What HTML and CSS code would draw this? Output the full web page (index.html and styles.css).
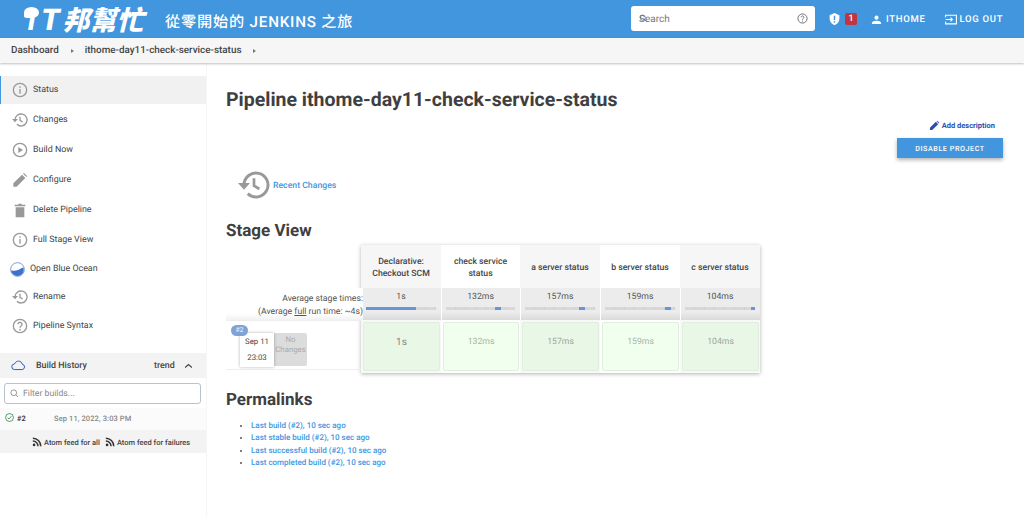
FILE: index.html
```html
<!DOCTYPE html>
<html lang="en">
<head>
<meta charset="utf-8">
<title>Pipeline ithome-day11-check-service-status</title>
<link rel="stylesheet" href="styles.css">
</head>
<body>
<header class="topbar">
  <div class="logo"><span class="logo-i">i</span><span class="logo-t">T</span><span class="logo-cjk">邦幫忙</span></div>
  <div class="site-title">從零開始的 JENKINS 之旅</div>
  <div class="search">
    <svg class="search-icon" viewBox="0 0 12 12"><circle cx="5" cy="5" r="3.4" fill="none" stroke="#666" stroke-width="1"/><path d="M7.5 7.5l3 3" stroke="#666" stroke-width="1"/></svg>
    <span class="search-text">Search</span>
    <svg class="help-icon" viewBox="0 0 24 24"><circle cx="12" cy="12" r="10" fill="none" stroke="#666" stroke-width="2"/><path d="M9 9.5a3 3 0 1 1 4.6 2.5c-1 .7-1.6 1.2-1.6 2.5" fill="none" stroke="#666" stroke-width="2"/><circle cx="12" cy="17.5" r="1.3" fill="#666"/></svg>
  </div>
  <svg class="shield" viewBox="0 0 24 24"><path d="M12 1L3 5v6c0 5.6 3.8 10.7 9 12 5.200-1.300 9-6.400 9-12V5z" fill="#fff"/><rect x="10.700" y="6" width="2.600" height="8" fill="#4296de"/><rect x="10.700" y="16" width="2.600" height="2.600" fill="#4296de"/></svg>
  <span class="badge">1</span>
  <svg class="user-icon" viewBox="0 0 24 24"><circle cx="12" cy="8" r="4.500" fill="#fff"/><path d="M2 22v-2.500c0-3.500 6.500-5 10-5s10 1.500 10 5V22z" fill="#fff"/></svg>
  <span class="top-link user-name">ITHOME</span>
  <svg class="logout-icon" viewBox="0 0 24 24"><path d="M2 8V4h20v16H2v-4M2 12h12M11 8.500l3.500 3.500-3.500 3.500" fill="none" stroke="#fff" stroke-width="2"/></svg>
  <span class="top-link">LOG OUT</span>
</header>

<nav class="crumbs">
  <span class="crumb">Dashboard</span><span class="crumb-arrow"></span>
  <span class="crumb">ithome-day11-check-service-status</span><span class="crumb-arrow"></span>
</nav>

<div class="page">
  <aside class="sidebar">
    <ul class="tasks">
      <li class="task active"><svg class="ti" viewBox="0 0 24 24"><circle cx="12" cy="12" r="10" class="ol"/><path d="M12 10.500v7" class="ol"/><circle cx="12" cy="7.500" r="1.300" class="fi"/></svg>Status</li>
      <li class="task"><svg class="ti" viewBox="0 0 24 24"><path d="M4.500 12a9 9 0 1 1 2.800 6.500" class="ol"/><path d="M0 10.500h9l-4.500 5z" class="fi"/><path d="M12 7v5.500l4 2.500" class="ol"/></svg>Changes</li>
      <li class="task"><svg class="ti" viewBox="0 0 24 24"><circle cx="12" cy="12" r="10" class="ol"/><path d="M9.500 7.500l7 4.500-7 4.500z" class="fi"/></svg>Build Now</li>
      <li class="task"><svg class="ti" viewBox="0 0 24 24"><path d="M2 22v-5L15 4l5 5L7 22zM16.500 2.500l1.500-1 4.500 4.500-1 1.500z" class="fi"/></svg>Configure</li>
      <li class="task"><svg class="ti" viewBox="0 0 24 24"><path d="M4 4h5l1-1.500h4L15 4h5v2.500H4zM5.500 8h13v15h-13z" class="fi"/></svg>Delete Pipeline</li>
      <li class="task"><svg class="ti" viewBox="0 0 24 24"><circle cx="12" cy="12" r="10" class="ol"/><path d="M12 10.500v7" class="ol"/><circle cx="12" cy="7.500" r="1.300" class="fi"/></svg>Full Stage View</li>
      <li class="task ocean"><svg class="oi" viewBox="0 0 24 24"><circle cx="12" cy="12" r="11" fill="#fff" stroke="#6d9be3" stroke-width="1.500"/><path d="M2 13c5 1.500 9 1 13-1 2.500-1.200 5-3.500 6.500-3 1 3 .5 7-1.500 9.500-2 2.500-5 4-8 4s-6-1.500-8-4c-1.200-1.500-2-3.500-2-5.500z" fill="#3f72c6"/></svg>Open Blue Ocean</li>
      <li class="task short"><svg class="ti" viewBox="0 0 24 24"><path d="M4.500 12a9 9 0 1 1 2.800 6.500" class="ol"/><path d="M0 10.500h9l-4.500 5z" class="fi"/><path d="M12 7v5.500l4 2.500" class="ol"/></svg>Rename</li>
      <li class="task"><svg class="ti" viewBox="0 0 24 24"><circle cx="12" cy="12" r="10" class="ol"/><path d="M9 9.500a3 3 0 1 1 4.600 2.500c-1 .7-1.600 1.200-1.600 2.500" class="ol"/><circle cx="12" cy="17.500" r="1.300" class="fi"/></svg>Pipeline Syntax</li>
    </ul>

    <section class="history">
      <div class="history-head">
        <svg class="cloud" viewBox="0 0 24 16"><path d="M6 14.500a4.500 4.500 0 0 1-.5-9C7 2.500 9.500 1 12 1c3 0 5.500 2 6 5a4.300 4.300 0 0 1 0 8.500z" fill="none" stroke="#2b5fc4" stroke-width="1.600"/></svg>
        <span class="history-title">Build History</span>
        <span class="trend">trend</span>
        <svg class="chev" viewBox="0 0 12 8"><path d="M1.500 6L6 2l4.500 4" fill="none" stroke="#444" stroke-width="1.400"/></svg>
      </div>
      <div class="filter">
        <svg class="filter-icon" viewBox="0 0 12 12"><circle cx="5" cy="5" r="3.800" fill="none" stroke="#777" stroke-width="1"/><path d="M7.800 7.800l3 3" stroke="#777" stroke-width="1"/></svg>
        <span class="filter-text">Filter builds...</span>
      </div>
      <div class="build-row">
        <svg class="ok" viewBox="0 0 24 24"><circle cx="12" cy="12" r="10.500" fill="none" stroke="#2e8b4a" stroke-width="2.200"/><path d="M7 12.500l3.500 3.500L17 8.500" fill="none" stroke="#2e8b4a" stroke-width="2.200"/></svg>
        <span class="build-no">#2</span>
        <span class="build-date">Sep 11, 2022, 3:03 PM</span>
      </div>
      <div class="feeds">
        <svg class="rss" viewBox="0 0 24 24"><circle cx="5" cy="19" r="3.200" fill="#333"/><path d="M2 9.500A12.500 12.500 0 0 1 14.500 22M2 3a19 19 0 0 1 19 19" fill="none" stroke="#333" stroke-width="3.600"/></svg>
        <span class="feed">Atom feed for all</span>
        <svg class="rss" viewBox="0 0 24 24"><circle cx="5" cy="19" r="3.200" fill="#333"/><path d="M2 9.500A12.500 12.500 0 0 1 14.500 22M2 3a19 19 0 0 1 19 19" fill="none" stroke="#333" stroke-width="3.600"/></svg>
        <span class="feed">Atom feed for failures</span>
      </div>
    </section>
  </aside>

  <main class="main">
    <h1 class="title">Pipeline ithome-day11-check-service-status</h1>
    <div class="actions">
      <div class="add-desc"><svg class="pencil" viewBox="0 0 24 24"><path d="M2 22v-5L15 4l5 5L7 22zM16.500 2.500l1.500-1 4.500 4.500-1 1.500z" fill="#2b4fb0"/></svg>Add description</div>
      <div class="disable-btn">DISABLE PROJECT</div>
    </div>
    <div class="recent">
      <svg class="recent-icon" viewBox="0 0 24 24"><path d="M4.500 12a9 9 0 1 1 2.800 6.500" fill="none" stroke="#999" stroke-width="2.200"/><path d="M0 10.500h9l-4.500 5z" fill="#999"/><path d="M12 7v5.500l4 2.500" fill="none" stroke="#999" stroke-width="2"/></svg>
      <span class="recent-link">Recent Changes</span>
    </div>
    <h2 class="section stage-title">Stage View</h2>

    <div class="stage">
      <div class="stage-left">
        <div class="avg-label">
          <div>Average stage times:</div>
          <div>(Average <u>full</u> run time: ~4s)</div>
        </div>
        <div class="run">
          <span class="run-no">#2</span>
          <div class="run-date"><span>Sep 11</span><span>23:03</span></div>
          <div class="run-changes">No<br>Changes</div>
        </div>
      </div>
      <div class="stage-grid">
        <div class="head alt">Declarative:<br>Checkout SCM</div>
        <div class="head">check service status</div>
        <div class="head alt">a server status</div>
        <div class="head">b server status</div>
        <div class="head alt">c server status</div>

        <div class="avg"><span>1s</span><div class="track"><i class="fill" style="left:0;width:71%"></i></div></div>
        <div class="avg"><span>132ms</span><div class="track"><i class="fill" style="left:71%;width:8%"></i></div></div>
        <div class="avg"><span>157ms</span><div class="track"><i class="fill" style="left:77%;width:9%"></i></div></div>
        <div class="avg"><span>159ms</span><div class="track"><i class="fill" style="left:86%;width:9%"></i></div></div>
        <div class="avg"><span>104ms</span><div class="track"><i class="fill" style="left:94%;width:6%"></i></div></div>

        <div class="cellwrap alt"><div class="cell dark big">1s</div></div>
        <div class="cellwrap"><div class="cell">132ms</div></div>
        <div class="cellwrap alt"><div class="cell dark">157ms</div></div>
        <div class="cellwrap"><div class="cell">159ms</div></div>
        <div class="cellwrap alt"><div class="cell dark">104ms</div></div>
      </div>
    </div>

    <h2 class="section perm-title">Permalinks</h2>
    <ul class="permalinks">
      <li>Last build (#2), 10 sec ago</li>
      <li>Last stable build (#2), 10 sec ago</li>
      <li>Last successful build (#2), 10 sec ago</li>
      <li>Last completed build (#2), 10 sec ago</li>
    </ul>
  </main>
</div>
</body>
</html>
```

FILE: styles.css
```css
* { box-sizing: border-box; }
html, body { margin: 0; padding: 0; height: 517px; overflow: hidden; background: #fff; }
body { font-family: Roboto, "Noto Sans CJK TC", sans-serif; color: #333; font-size: 9px; text-rendering: geometricPrecision; }
ul { list-style: none; margin: 0; padding: 0; }

.topbar { height: 38px; background: #4296de; color: #fff; display: flex; align-items: center; padding-left: 24px; }
.logo { width: 130px; margin-right: 11px; display: flex; align-items: center; font-family: "Noto Sans CJK TC", sans-serif; font-weight: 900; font-style: italic; line-height: 38px; white-space: nowrap; }
.logo-i { font: italic 900 27px Roboto, sans-serif; position: relative; margin: 3px 6px 0 4px; }
.logo-i::after { content: ""; position: absolute; left: -4px; top: 2px; width: 15px; height: 11px; background: #fff; border-radius: 50% 50% 50% 20%; }
.logo-t { font: italic 900 30px Roboto, sans-serif; margin: 3px 3px 0 0; }
.logo-cjk { font-size: 27px; }
.site-title { font-size: 15.200px; font-weight: 500; letter-spacing: .8px; white-space: nowrap; font-family: Roboto, "Noto Sans CJK TC", sans-serif; width: 466px; padding-top: 3px; }
.search { width: 184px; height: 25px; margin-top: -1px; background: #fff; border-radius: 3px; display: flex; align-items: center; position: relative; padding-left: 8px; margin-right: 13px; flex: none; }
.search-icon { position: absolute; left: 8px; top: 8px; width: 9px; height: 9px; }
.search-text { font-size: 10px; color: #777; padding-top: 1px; }
.help-icon { position: absolute; right: 7px; top: 7px; width: 11px; height: 11px; }
.shield { width: 13px; height: 14px; flex: none; margin-right: 4px; }
.badge { width: 12px; height: 12px; background: #c0353e; border-radius: 2px; font-size: 9px; font-weight: 500; text-align: center; line-height: 12px; flex: none; margin-right: 14px; }
.user-icon { width: 11px; height: 11px; flex: none; margin-right: 4px; }
.top-link { font-size: 9.500px; font-weight: 500; letter-spacing: .7px; white-space: nowrap; }
.user-name { margin-right: 18px; }
.logout-icon { width: 14px; height: 13px; flex: none; margin-right: 2px; }

.crumbs { height: 25px; background: #f6f6f6; box-shadow: 0 1px 2px rgba(0,0,0,.25); display: flex; align-items: center; padding-left: 11px; position: relative; font-weight: 500; color: #444; }
.crumb { font-size: 9.900px; white-space: nowrap; }
.crumb-arrow { width: 0; height: 0; border-left: 3px solid #777; border-top: 2px solid transparent; border-bottom: 2px solid transparent; margin: 0 11px 0 12px; }

.page { display: flex; height: 454px; }
.sidebar { width: 207px; flex: none; border-right: 1px solid #f6f6f6; padding-top: 12px; }
.task { height: 30px; display: flex; align-items: center; padding-left: 12px; font-size: 8.900px; color: #444; white-space: nowrap; }
.task.active { height: 28px; margin-bottom: 1px; margin-top: 1px; background: #f1f1f1; border-left: 1px solid #4296de; padding-left: 11px; }
.task.ocean, .task.short { height: 28px; }
.task.ocean { padding-left: 10px; }
.ti { width: 16px; height: 16px; flex: none; margin-right: 5px; }
.oi { width: 15px; height: 15px; flex: none; margin-right: 5px; }
.ol { fill: none; stroke: #999; stroke-width: 2; }
.fi { fill: #999; }

.history { margin-top: 12px; }
.history-head { height: 25px; background: #f3f3f3; display: flex; align-items: center; padding-left: 11px; font-weight: 500; }
.cloud { width: 15px; height: 11px; flex: none; margin-right: 10px; }
.history-title { width: 118px; font-size: 8.900px; color: #444; }
.trend { font-size: 8.900px; color: #444; margin-right: 9px; }
.chev { width: 9px; height: 6px; }
.filter { height: 21px; margin: 5px 5px 0 4px; border: 1px solid #b9c3cc; border-radius: 3px; display: flex; align-items: center; padding-left: 5px; background: #fff; }
.filter-icon { width: 9px; height: 9px; flex: none; margin-right: 4px; }
.filter-text { font-size: 8.700px; color: #888; }
.build-row { height: 22px; margin-top: 4px; display: flex; align-items: center; padding: 0 0 2px 5px; background: #fbfbfb; }
.ok { width: 9px; height: 9px; flex: none; margin: -2px 3px 0 0; }
.build-no { font-size: 7.500px; font-weight: 700; color: #444; width: 37px; }
.build-date { font-size: 7.500px; font-weight: 500; color: #888; letter-spacing: .1px; }
.feeds { height: 23px; background: #f3f3f3; display: flex; align-items: center; padding: 1px 0 0 32px; font-weight: 500; }
.rss { width: 10px; height: 10px; flex: none; margin-right: 2px; }
.feed { font-size: 7.500px; color: #444; margin-right: 5px; white-space: nowrap; }

.main { flex: 1; padding-left: 19px; min-width: 0; }
.title { margin: 25px 0 0; font-size: 19.500px; line-height: 23px; font-weight: 700; color: #3f3f3f; white-space: nowrap; }
.actions { display: flex; flex-direction: column; align-items: flex-end; padding-right: 21px; margin-top: 8px; }
.add-desc { display: flex; align-items: center; font-size: 7.500px; font-weight: 700; color: #2b4fb0; margin-right: 8px; height: 12px; }
.pencil { width: 11px; height: 11px; margin-right: 2px; }
.disable-btn { width: 106px; height: 20px; margin-top: 7px; background: #4296de; color: #fff; font-size: 7.200px; font-weight: 500; letter-spacing: .55px; display: flex; align-items: center; justify-content: center; box-shadow: 0 2px 4px rgba(0,0,0,.3); }
.recent { display: flex; align-items: center; margin: 11px 0 0 12px; height: 32px; }
.recent-icon { width: 32px; height: 32px; margin-right: 3px; }
.recent-link { font-size: 8.700px; font-weight: 500; color: #3e97e2; padding-top: 2px; }
.section { margin: 0; font-weight: 700; font-size: 17px; line-height: 20px; color: #3f3f3f; }
.stage-title { margin-top: 20px; }

.stage { display: flex; margin-top: 4px; }
.stage-left { width: 135px; flex: none; padding-top: 43px; position: relative; z-index: 1; }
.avg-label { height: 32px; padding-top: 5px; text-align: right; font-size: 8.700px; line-height: 12.500px; color: #555; white-space: nowrap; margin-right: -2px; background: linear-gradient(#fff 80%, #f1f1f1); }
.run { height: 50px; border-top: 1px solid #eee; border-bottom: 1px solid #eee; position: relative; display: flex; padding: 12px 0 0 14px; }
.run-no { position: absolute; left: 5px; top: 4px; width: 17px; height: 11px; border-radius: 6px; background: #7fa3d6; color: #dfe8f5; font-size: 7px; line-height: 11px; text-align: center; font-weight: 500; z-index: 1; }
.run-date { width: 34px; height: 34px; background: #fff; box-shadow: 0 0 3px rgba(0,0,0,.3); display: flex; flex-direction: column; justify-content: space-between; align-items: center; padding: 4px 0 5px; font-size: 7.800px; color: #444; position: relative; }
.run-changes { width: 33px; height: 33px; background: #dcdcdc; border-radius: 0 2px 2px 0; font-size: 7.800px; line-height: 10px; color: #aaa; text-align: center; padding-top: 2px; }
.stage-grid { width: 399px; flex: none; display: grid; grid-template-columns: 80px 79px 80px 80px 80px; grid-template-rows: 43px 32px 53px; box-shadow: 0 1px 4px rgba(0,0,0,.3); }
.head { background: #fff; display: flex; align-items: center; justify-content: center; text-align: center; font-size: 8.700px; line-height: 12.500px; font-weight: 500; color: #444; padding: 3px 8px 0; }
.head.alt { background: #f6f6f6; }
.avg { background: linear-gradient(#ececec, #ececec 75%, #dadada); border-left: 1px solid #fff; text-align: center; font-size: 8.700px; color: #555; padding: 3px 5px 0 4px; }
.avg span { display: block; line-height: 12px; }
.track { height: 3px; margin-top: 4px; background: repeating-linear-gradient(90deg, #d8d8d8 0 9px, #cfcfcf 9px 10px); position: relative; }
.fill { position: absolute; top: 0; height: 3px; background: #6c93d3; }
.cellwrap { background: #fff; padding: 2px 1px 2px 2px; }
.cellwrap.alt { background: #f8f8f8; }
.cell { height: 100%; background: #f0ffee; border: 1px solid #e0eedd; border-radius: 2px; display: flex; align-items: center; justify-content: center; padding-bottom: 9px; font-size: 8.700px; color: #a8b4a6; }
.cell.dark { background: #e9f7e7; color: #9aa69a; }
.cell.big { font-size: 10px; color: #888; }
.perm-title { margin-top: 17px; }
.permalinks { margin: 10px 0 0 25px; list-style: disc; padding-left: 0; }
.permalinks li { font-size: 8px; line-height: 12.300px; color: #3e97e2; font-weight: 500; }
.permalinks li::marker { color: #555; }
```
